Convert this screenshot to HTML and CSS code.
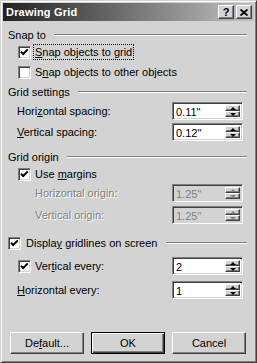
FILE: index.html
```html
<!DOCTYPE html>
<html lang="en">
<head>
  <meta charset="UTF-8" />
  <title>Drawing Grid</title>
  <link rel="stylesheet" href="styles.css">
</head>
<body>
  <div class="dialog">
    <div class="titlebar">
      <span class="title">Drawing Grid</span>
      <div class="caption-btns">
        <span class="cbtn">?</span>
        <span class="cbtn">
          <svg width="8" height="7" viewBox="0 0 8 7"><path d="M0.5 0.5 L7.5 6.5 M7.5 0.5 L0.5 6.5" stroke="#000" stroke-width="1.7"/></svg>
        </span>
      </div>
    </div>

    <div class="body">
      <!-- Snap to -->
      <div class="group-head"><span>Snap to</span><span class="etch"></span></div>
      <div class="check-row mt1">
        <span class="box"><svg width="9" height="9" viewBox="0 0 9 9"><polyline points="1,3.8 3.2,6 7.8,1.4" fill="none" stroke="#000" stroke-width="2"/></svg></span>
        <span class="lbl focus"><u>S</u>nap objects to grid</span>
      </div>
      <div class="check-row mt4">
        <span class="box"></span>
        <span class="lbl">S<u>n</u>ap objects to other objects</span>
      </div>

      <!-- Grid settings -->
      <div class="group-head mt4"><span>Grid settings</span><span class="etch"></span></div>
      <div class="spin-row mt1">
        <span>Hori<u>z</u>ontal spacing:</span>
        <div class="spin"><span class="val">0.11"</span><div class="arrows"><span class="ab"><i class="up"></i></span><span class="ab"><i class="dn"></i></span></div></div>
      </div>
      <div class="spin-row mt1">
        <span><u>V</u>ertical spacing:</span>
        <div class="spin"><span class="val">0.12"</span><div class="arrows"><span class="ab"><i class="up"></i></span><span class="ab"><i class="dn"></i></span></div></div>
      </div>

      <!-- Grid origin -->
      <div class="group-head mt7"><span>Grid origin</span><span class="etch"></span></div>
      <div class="check-row mt1">
        <span class="box"><svg width="9" height="9" viewBox="0 0 9 9"><polyline points="1,3.8 3.2,6 7.8,1.4" fill="none" stroke="#000" stroke-width="2"/></svg></span>
        <span class="lbl">Use <u>m</u>argins</span>
      </div>
      <div class="spin-row disabled indent mt1">
        <span>Horizontal origin:</span>
        <div class="spin"><span class="val">1.25"</span><div class="arrows"><span class="ab"><i class="up"></i></span><span class="ab"><i class="dn"></i></span></div></div>
      </div>
      <div class="spin-row disabled indent mt2">
        <span>Vertical origin:</span>
        <div class="spin"><span class="val">1.25"</span><div class="arrows"><span class="ab"><i class="up"></i></span><span class="ab"><i class="dn"></i></span></div></div>
      </div>

      <!-- Gridlines -->
      <div class="group-head check-head mt10">
        <span class="box"><svg width="9" height="9" viewBox="0 0 9 9"><polyline points="1,3.8 3.2,6 7.8,1.4" fill="none" stroke="#000" stroke-width="2"/></svg></span>
        <span class="lbl">Displa<u>y</u> gridlines on screen</span>
        <span class="etch"></span>
      </div>
      <div class="spin-row check-spin mt5">
        <div class="check-row">
          <span class="box"><svg width="9" height="9" viewBox="0 0 9 9"><polyline points="1,3.8 3.2,6 7.8,1.4" fill="none" stroke="#000" stroke-width="2"/></svg></span>
          <span class="lbl">Ver<u>t</u>ical every:</span>
        </div>
        <div class="spin"><span class="val">2</span><div class="arrows"><span class="ab"><i class="up"></i></span><span class="ab"><i class="dn"></i></span></div></div>
      </div>
      <div class="spin-row mt4">
        <span><u>H</u>orizontal every:</span>
        <div class="spin"><span class="val">1</span><div class="arrows"><span class="ab"><i class="up"></i></span><span class="ab"><i class="dn"></i></span></div></div>
      </div>

      <div class="buttons">
        <button class="btn">De<u>f</u>ault...</button>
        <button class="btn default">OK</button>
        <button class="btn">Cancel</button>
      </div>
    </div>
  </div>
</body>
</html>
```

FILE: styles.css
```css
body {
  margin: 0;
  background: #d3d3d3;
  font-family: "Liberation Sans", Arial, sans-serif;
  font-size: 11px;
  color: #000;
}

u {
  text-decoration: underline;
  text-underline-offset: 1px;
}

/* Window frame */
.dialog {
  width: 257px;
  height: 363px;
  box-sizing: border-box;
  background: #d3d3d3;
  border: 1px solid;
  border-color: #d3d3d3 #404040 #404040 #d3d3d3;
  box-shadow: inset 1px 1px #fff, inset -1px -1px #808080;
  padding: 2px;
}

.titlebar {
  height: 18px;
  display: flex;
  align-items: center;
  justify-content: space-between;
  background: linear-gradient(to right, #222, #c2c2c2);
  padding: 0 2px 0 3px;
}

.title {
  color: #fff;
  font-weight: bold;
  font-size: 11px;
  letter-spacing: 0.2px;
}

.caption-btns {
  display: flex;
  gap: 2px;
}

.cbtn {
  width: 16px;
  height: 14px;
  box-sizing: border-box;
  display: flex;
  align-items: center;
  justify-content: center;
  background: #d3d3d3;
  border: 1px solid;
  border-color: #fff #404040 #404040 #fff;
  box-shadow: inset -1px -1px #808080;
  font-weight: bold;
  font-size: 11px;
  line-height: 1;
}

/* Content */
.body {
  padding: 6px 7px 0 5px;
}

.mt1 { margin-top: 1px; }
.mt2 { margin-top: 2px; }
.mt4 { margin-top: 4px; }
.mt5 { margin-top: 5px; }
.mt7 { margin-top: 7px; }
.mt10 { margin-top: 10px; }

.group-head {
  height: 16px;
  display: flex;
  align-items: center;
}

.etch {
  flex: 1;
  height: 0;
  border-top: 1px solid #808080;
  border-bottom: 1px solid #fff;
  margin-left: 8px;
}

.check-row {
  height: 16px;
  display: flex;
  align-items: center;
  padding-left: 10px;
}

.box {
  width: 13px;
  height: 13px;
  box-sizing: border-box;
  flex: none;
  background: #fff;
  border: 1px solid;
  border-color: #808080 #fff #fff #808080;
  box-shadow: inset 1px 1px #404040, inset -1px -1px #d3d3d3;
  display: flex;
  align-items: center;
  justify-content: center;
}

.lbl {
  margin-left: 2px;
  padding: 1px 1px;
  border: 1px dotted transparent;
}

.lbl.focus {
  border-color: #000;
}

.check-head .lbl {
  margin-left: 3px;
}

.check-head .etch {
  margin-left: 7px;
}

.spin-row {
  height: 20px;
  display: flex;
  align-items: center;
  justify-content: space-between;
  padding: 0 4px 0 9px;
}

.spin-row.indent {
  padding-left: 27px;
}

.spin-row.check-spin {
  padding-left: 0;
}

.spin {
  width: 71px;
  height: 18px;
  box-sizing: border-box;
  display: flex;
  align-items: stretch;
  background: #fff;
  border: 1px solid;
  border-color: #808080 #fff #fff #808080;
  box-shadow: inset 1px 1px #404040, inset -1px -1px #d3d3d3;
  padding: 2px 2px 2px 2px;
}

.val {
  flex: 1;
  line-height: 14px;
  padding-left: 1px;
}

.arrows {
  width: 15px;
  display: flex;
  flex-direction: column;
}

.ab {
  flex: 1;
  box-sizing: border-box;
  background: #d3d3d3;
  border: 1px solid;
  border-color: #fff #404040 #404040 #fff;
  box-shadow: inset -1px -1px #808080;
  display: flex;
  align-items: center;
  justify-content: center;
}

.ab i {
  width: 0;
  height: 0;
  border-left: 3px solid transparent;
  border-right: 3px solid transparent;
}

.ab .up {
  border-bottom: 3px solid #000;
}

.ab .dn {
  border-top: 3px solid #000;
}

.disabled {
  color: #808080;
}

.disabled > span {
  text-shadow: 1px 1px #fff;
}

.disabled .spin {
  background: #d3d3d3;
}

.disabled .val {
  text-shadow: none;
}

.disabled .ab .up {
  border-bottom-color: #808080;
}

.disabled .ab .dn {
  border-top-color: #808080;
}

/* Buttons */
.buttons {
  display: flex;
  gap: 7px;
  margin: 32px 0 0 2px;
}

.btn {
  width: 74px;
  height: 22px;
  box-sizing: border-box;
  background: #d3d3d3;
  font-family: "Liberation Sans", Arial, sans-serif;
  font-size: 11px;
  color: #000;
  border: 1px solid;
  border-color: #fff #404040 #404040 #fff;
  box-shadow: inset -1px -1px #808080;
  padding: 0;
}

.btn.default {
  border: 1px solid #000;
  box-shadow: inset 1px 1px #fff, inset -1px -1px #404040, inset -2px -2px #808080;
}
```
